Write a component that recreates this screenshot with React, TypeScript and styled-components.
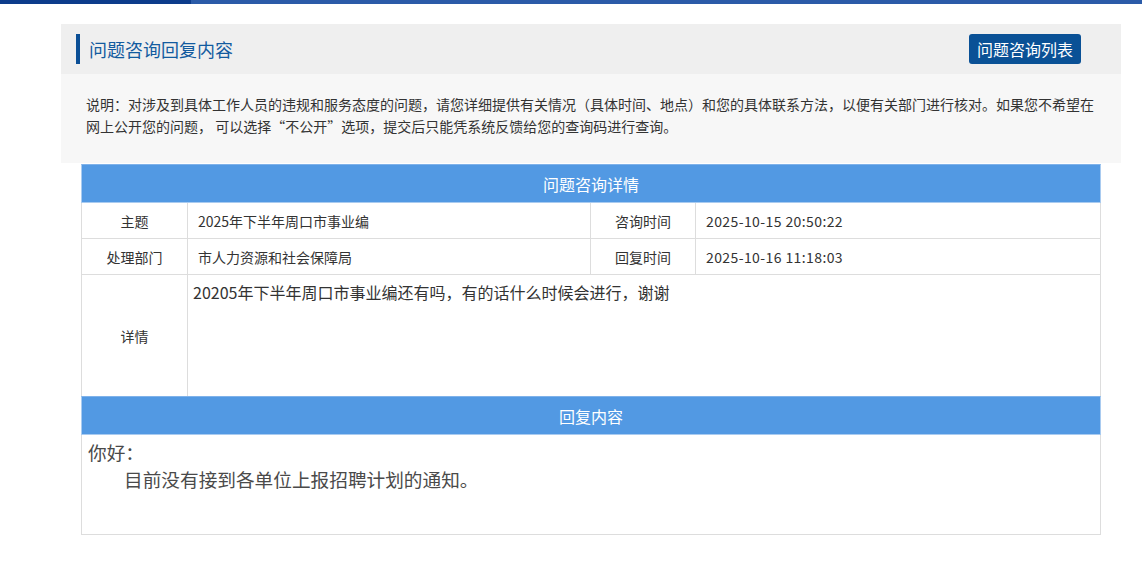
import React from "react";
import styled, { createGlobalStyle } from "styled-components";

const GlobalStyle = createGlobalStyle`
  html, body {
    margin: 0;
    padding: 0;
    background: #ffffff;
    font-family: "Noto Sans CJK SC", "Noto Sans", sans-serif;
    color: #333333;
  }
  * { box-sizing: border-box; }
`;

const TopBar = styled.div`
  height: 4px;
  background: linear-gradient(to right, #0d3c8b 0, #0d3c8b 191px, #2b5ba8 191px, #2b5ba8 100%);
`;

const Page = styled.div`
  padding: 20px 0 0 61px;
`;

const Panel = styled.div`
  width: 1060px;
`;

const PanelHeader = styled.div`
  height: 50px;
  background: #efefef;
  display: flex;
  align-items: center;
  justify-content: space-between;
  padding: 0 40px 0 15px;
`;

const TitleWrap = styled.div`
  display: flex;
  align-items: center;
  gap: 9px;
`;

const TitleBar = styled.span`
  display: block;
  width: 4px;
  height: 30px;
  background: #0b4f96;
`;

const Title = styled.h2`
  margin: 0;
  font-size: 18px;
  font-weight: normal;
  line-height: 30px;
  color: #135b9f;
`;

const ListButton = styled.a`
  display: flex;
  align-items: center;
  justify-content: center;
  width: 112px;
  height: 30px;
  border-radius: 3px;
  background: #0a5196;
  color: #ffffff;
  font-size: 16px;
  text-decoration: none;
  cursor: pointer;
`;

const Notice = styled.div`
  background: #f7f7f7;
  padding: 19px 25px 26px 25px;
  font-size: 14px;
  line-height: 22px;
  color: #333333;
  height: 89px;
`;

const Table = styled.div`
  width: 1020px;
  margin: 1px 0 0 20px;
`;

const BlueHead = styled.div`
  height: 39px;
  background: #5299e3;
  border: 1px solid #a9cbf0;
  border-top-color: #7fb2ea;
  color: #ffffff;
  font-size: 16px;
  display: flex;
  align-items: center;
  justify-content: center;
`;

const Row = styled.div<{ $h: number }>`
  display: grid;
  grid-template-columns: 106px 403px 105px 1fr;
  height: ${(p) => p.$h}px;
  border-left: 1px solid #dddddd;
  border-right: 1px solid #dddddd;
  border-bottom: 1px solid #dddddd;
`;

const DetailRow = styled.div`
  display: grid;
  grid-template-columns: 106px 1fr;
  height: 121px;
  border-left: 1px solid #dddddd;
  border-right: 1px solid #dddddd;
`;

const Label = styled.div`
  display: flex;
  align-items: center;
  justify-content: center;
  font-size: 14px;
  color: #333333;
  border-right: 1px solid #dddddd;
`;

const Value = styled.div<{ $last?: boolean }>`
  display: flex;
  align-items: center;
  padding-left: 10px;
  font-size: 14px;
  letter-spacing: ${(p) => (p.$last ? "0.4px" : "0")};
  color: #333333;
  border-right: ${(p) => (p.$last ? "none" : "1px solid #dddddd")};
`;

const DetailText = styled.div`
  padding: 5px 5px 0 5px;
  font-size: 16px;
  line-height: 24px;
  color: #333333;
`;

const ReplyBody = styled.div`
  height: 100px;
  border: 1px solid #dddddd;
  border-top: none;
  padding: 5px 6px 0 6px;
  font-family: "Liberation Serif", "Noto Sans CJK SC", serif;
  font-size: 14pt;
  line-height: 27px;
  color: #4a4a4a;
`;

const ReplyLine = styled.p<{ $indent?: boolean }>`
  margin: 0;
  text-indent: ${(p) => (p.$indent ? "36px" : "0")};
`;

export default function App() {
  return (
    <>
      <GlobalStyle />
      <TopBar />
      <Page>
        <Panel>
          <PanelHeader>
            <TitleWrap>
              <TitleBar />
              <Title>问题咨询回复内容</Title>
            </TitleWrap>
            <ListButton>问题咨询列表</ListButton>
          </PanelHeader>
          <Notice>
            说明：对涉及到具体工作人员的违规和服务态度的问题，请您详细提供有关情况（具体时间、地点）和您的具体联系方法，以便有关部门进行核对。如果您不希望在网上公开您的问题，
            可以选择“不公开”选项，提交后只能凭系统反馈给您的查询码进行查询。
          </Notice>
        </Panel>
        <Table>
          <BlueHead>问题咨询详情</BlueHead>
          <Row $h={36}>
            <Label>主题</Label>
            <Value>2025年下半年周口市事业编</Value>
            <Label>咨询时间</Label>
            <Value $last>2025-10-15 20:50:22</Value>
          </Row>
          <Row $h={36}>
            <Label>处理部门</Label>
            <Value>市人力资源和社会保障局</Value>
            <Label>回复时间</Label>
            <Value $last>2025-10-16 11:18:03</Value>
          </Row>
          <DetailRow>
            <Label>详情</Label>
            <DetailText>20205年下半年周口市事业编还有吗，有的话什么时候会进行，谢谢</DetailText>
          </DetailRow>
          <BlueHead>回复内容</BlueHead>
          <ReplyBody>
            <ReplyLine>你好：</ReplyLine>
            <ReplyLine $indent>目前没有接到各单位上报招聘计划的通知。</ReplyLine>
          </ReplyBody>
        </Table>
      </Page>
    </>
  );
}
